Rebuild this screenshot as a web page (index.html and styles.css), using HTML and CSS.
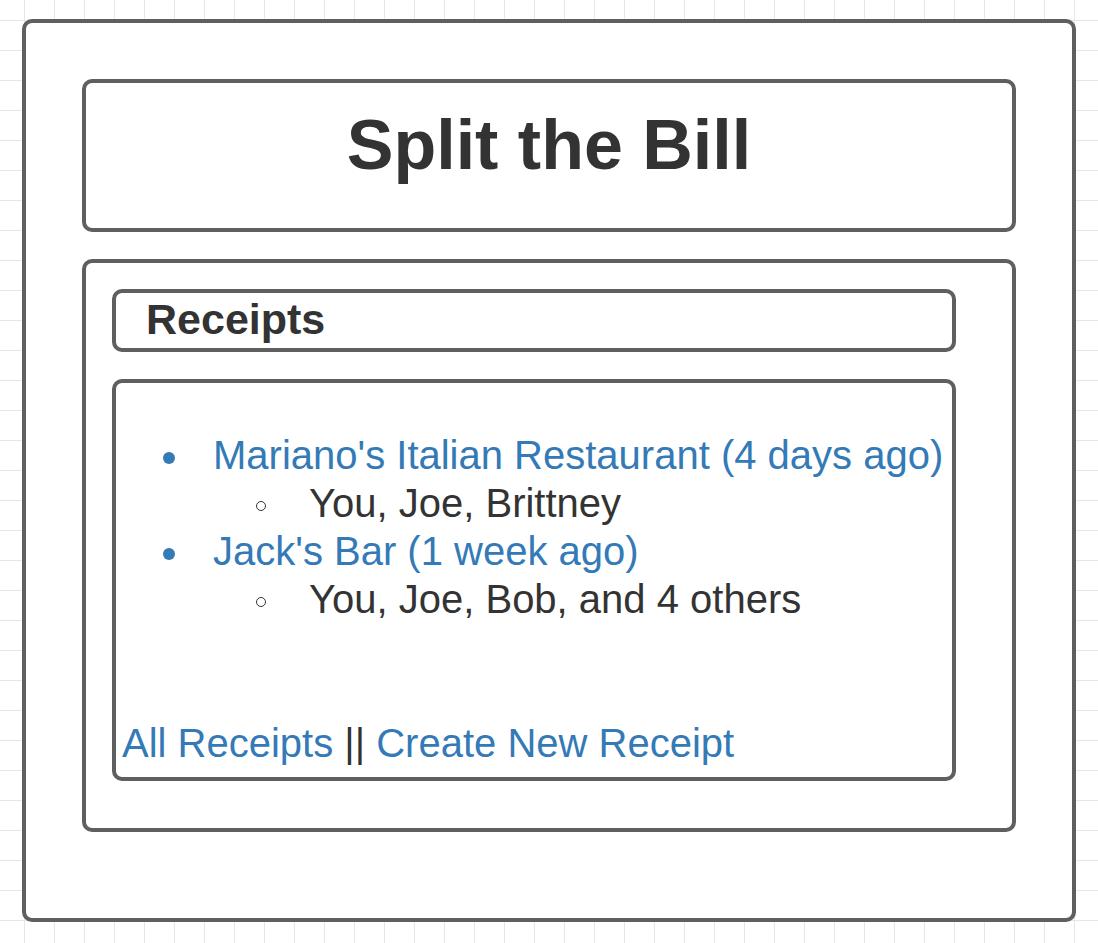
FILE: index.html
```html
<!DOCTYPE html>
<html lang="en">
<head>
<meta charset="utf-8">
<title>Split the Bill</title>
<link rel="stylesheet" href="styles.css">
</head>
<body>
<div class="frame">
  <header class="title-box">
    <h1 class="title">Split the Bill</h1>
  </header>
  <section class="panel">
    <div class="bar">
      <h2 class="bar-title">Receipts</h2>
    </div>
    <div class="list-box">
      <ul class="receipts">
        <li>
          <div class="row"><span class="dot"></span><a class="link" href="#">Mariano's Italian Restaurant (4 days ago)</a></div>
          <ul class="people">
            <li class="row"><span class="ring"></span><span>You, Joe, Brittney</span></li>
          </ul>
        </li>
        <li>
          <div class="row"><span class="dot"></span><a class="link" href="#">Jack's Bar (1 week ago)</a></div>
          <ul class="people">
            <li class="row"><span class="ring"></span><span>You, Joe, Bob, and 4 others</span></li>
          </ul>
        </li>
      </ul>
      <div class="footer-links"><a class="link" href="#">All Receipts</a> || <a class="link" href="#">Create New Receipt</a></div>
    </div>
  </section>
</div>
</body>
</html>
```
FILE: styles.css
```css
html, body {
  margin: 0;
  padding: 0;
}
body {
  width: 1098px;
  height: 943px;
  overflow: hidden;
  box-sizing: border-box;
  padding: 19px 0 0 22px;
  font-family: "Liberation Sans", Arial, sans-serif;
  color: #333333;
  background-color: #ffffff;
  background-image:
    linear-gradient(to right, #e6e6e6 1px, transparent 1px),
    linear-gradient(to bottom, #e6e6e6 1px, transparent 1px);
  background-size: 30px 30px;
  background-position: 24px 20px;
}
.frame {
  box-sizing: border-box;
  width: 1054px;
  height: 903px;
  border: 4px solid #5f5f5f;
  border-radius: 10px;
  background: #ffffff;
  padding: 56px 56px 0 56px;
  display: flex;
  flex-direction: column;
  gap: 27px;
}
.title-box {
  box-sizing: border-box;
  height: 153px;
  border: 4px solid #5f5f5f;
  border-radius: 10px;
  padding-top: 20px;
}
.title {
  margin: 0;
  text-align: center;
  font-size: 70px;
  line-height: 84px;
  font-weight: bold;
  color: #333333;
}
.panel {
  box-sizing: border-box;
  height: 573px;
  border: 4px solid #5f5f5f;
  border-radius: 10px;
  padding: 26px 56px 0 26px;
  display: flex;
  flex-direction: column;
  gap: 27px;
}
.bar {
  box-sizing: border-box;
  height: 63px;
  border: 4px solid #5f5f5f;
  border-radius: 10px;
  padding: 0 0 0 30px;
}
.bar-title {
  margin: 1px 0 0 0;
  font-size: 43px;
  line-height: 50px;
  font-weight: bold;
  color: #333333;
}
.list-box {
  box-sizing: border-box;
  height: 402px;
  border: 4px solid #5f5f5f;
  border-radius: 10px;
  padding: 48px 0 10px 6px;
  display: flex;
  flex-direction: column;
  font-size: 40px;
  line-height: 48px;
}
.receipts {
  list-style: none;
  margin: 0;
  padding: 0 0 0 41px;
}
.people {
  list-style: none;
  margin: 0;
  padding: 0 0 0 93px;
}
.row {
  display: flex;
  align-items: center;
  white-space: nowrap;
}
.dot {
  flex: none;
  width: 12px;
  height: 12px;
  border-radius: 50%;
  background: #337ab7;
  margin: 6px 38px 0 0;
}
.ring {
  flex: none;
  box-sizing: border-box;
  width: 10px;
  height: 10px;
  border-radius: 50%;
  border: 1.5px solid #333333;
  margin: 6px 43px 0 0;
}
.link {
  color: #337ab7;
  text-decoration: none;
}
.footer-links {
  margin-top: auto;
  white-space: nowrap;
  color: #333333;
}
```
